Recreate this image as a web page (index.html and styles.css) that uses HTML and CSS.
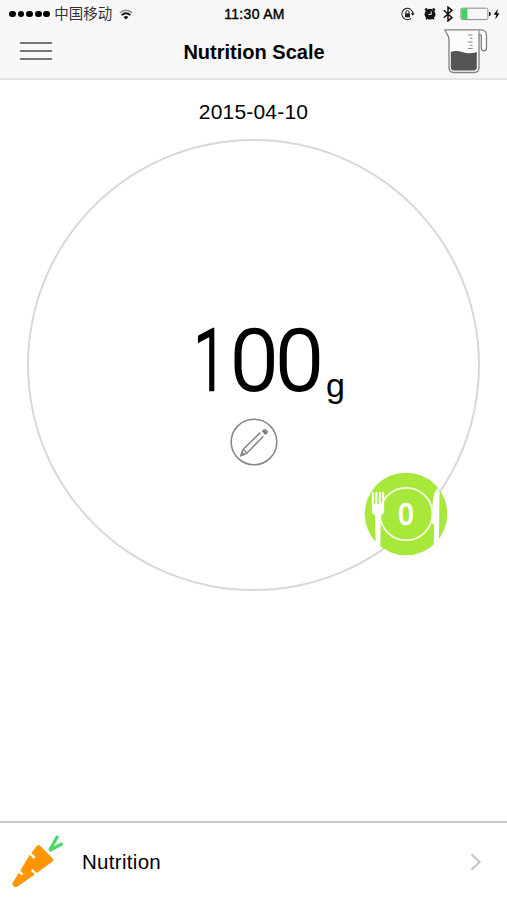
FILE: index.html
```html
<!DOCTYPE html>
<html lang="en">
<head>
<meta charset="utf-8">
<title>Nutrition Scale</title>
<link rel="stylesheet" href="styles.css">
</head>
<body>
<div class="app">
  <header class="header">
    <div class="status">
      <div class="carrier">
        <span class="dots"><i></i><i></i><i></i><i></i><i></i></span>
        <span class="operator">中国移动</span>
        <svg class="wifi" width="14" height="11" viewBox="0 0 14 11" fill="none" stroke="#111">
          <path d="M.8 4Q7-1.5 13.2 4" stroke="#888" stroke-width="1.3"/>
          <path d="M2.7 6.2Q7 2.3 11.3 6.2" stroke-width="1.8"/>
          <path d="M4.6 8Q7 6.2 9.4 8L7 10.6z" fill="#111" stroke="none"/>
        </svg>
      </div>
      <time class="clock">11:30 AM</time>
      <svg class="indicators" width="102" height="16" viewBox="0 0 102 16" fill="none" stroke="#222">
        <path d="M11 3.6A5.6 5.6 0 1 0 11 12.4M11.2 3.8A5.6 5.6 0 0 1 13 8" stroke-width="1.1"/>
        <path d="M10.9 7.2h3.8l-2 2.6z" fill="#222" stroke="none"/>
        <path d="M5 7.3h5v4H5z" fill="#222" stroke="none"/>
        <path d="M6 7.5V6a1.5 1.5 0 0 1 3 0v1.5"/>
        <circle cx="30" cy="8.2" r="5.4" fill="#111" stroke="none"/>
        <path d="M25 4.2l2.2-1.7M35 4.2l-2.2-1.7" stroke="#111" stroke-width="1.8"/>
        <path d="M27.2 11.8l-1.2 1.6M32.8 11.8l1.2 1.6" stroke="#111" stroke-width="1.4"/>
        <path d="M31.2 5.4V8.4h-2.8" stroke="#fff" stroke-width="1"/>
        <path d="M43.8 4.2l8.2 7.5-4 3.2V1.1l4 3.2-8.2 7.5" stroke="#111" stroke-width="1.5"/>
        <rect x="60.9" y="2.2" width="27" height="11.4" rx="1.4" stroke="#8b8b8b" stroke-width="1"/>
        <path d="M61.4 2.7h6v10.4h-6z" fill="#40d45d" stroke="none"/>
        <path d="M89 6h1.2q1.2 2 0 4H89z" fill="#222" stroke="none"/>
        <path d="M98 2.8l-4.5 6h2.7l-.9 4.7 4.3-6.3H97z" fill="#111" stroke="none"/>
      </svg>
    </div>
    <div class="nav">
      <div class="menu"><i></i><i></i><i></i></div>
      <h1 class="title">Nutrition Scale</h1>
      <svg class="jug" width="46" height="46" viewBox="0 0 46 46" fill="none" stroke="#808080" stroke-width="1.3" stroke-linejoin="round">
        <path d="M2.8 1.8h36q5.7 0 5.7 6v12q0 3-2.6 3t-2.6-3V8.5q0-2-2.3-2v33q0 5-5 5H12q-5 0-5-5V11.5q0-3-1.7-5L2.8 2z" fill="#fcfcfc"/>
        <path d="M37 6.5V3q0-1-1-1" stroke="#999"/>
        <path d="M8.8 24q5-2 12 .2t14-.3v15.6q0 3-3.4 3H12.2q-3.4 0-3.4-3z" fill="#555" stroke="none"/>
        <path d="M26 7h4.5M28 10.5h2.5M26 14h4.5M28 17.2h2.5M26 20.5h4.5" stroke="#888" stroke-width="1.1"/>
      </svg>
    </div>
  </header>

  <main class="main">
    <div class="date">2015-04-10</div>
    <section class="dial">
      <div class="reading"><span class="one">1</span><span class="zeros">00</span><span class="unit">g</span></div>
      <div class="edit">
        <svg width="48" height="48" viewBox="0 0 48 48" fill="none" stroke="#858585" stroke-width="1.5">
          <circle cx="24" cy="24" r="22.8"/>
          <path d="M30.3 14.6L12.9 31.6l-1.9 5.9 5.7-2.1L33.4 18.2M12.9 31.6q2.6.8 3.8 3.8"/>
          <path d="M11 37.5l.9-3 2 2.2z" fill="#777"/>
          <path d="M31.8 13.2l2-1.9 3.7 3.8-1.9 1.9zM34.1 11.1l1.2-.4 3 3-.5 1.2z" fill="#777" stroke="none"/>
        </svg>
      </div>
      <div class="plate">
        <svg width="84" height="84" viewBox="0 0 84 84">
          <defs><clipPath id="disc"><circle cx="42" cy="42" r="41.3"/></clipPath></defs>
          <circle cx="42" cy="42" r="41.3" fill="#a7e83a"/>
          <g clip-path="url(#disc)">
            <circle cx="42.2" cy="42" r="26.2" fill="none" stroke="#f7ffe9" stroke-width="1.8"/>
            <path d="M7.8 20.7q0-1 1-1t1 1V32h1.5V20.7q0-1 1-1t1 1V32h1.5V20.7q0-1 1-1t1 1V32h1.4V20.7q0-1 1-1t1 1V38q0 4-3.4 5.5L16.2 84h-4.4l-.7-40.5Q7.8 42 7.8 38z" fill="#fff"/>
            <path d="M74.8 84h-5.4l.8-31.2-2.4-1.3q.2-25 3-31 1.4-4 3.4-4 1.2.6 1.3 4z" fill="#fff"/>
          </g>
        </svg>
        <span class="count">0</span>
      </div>
    </section>
  </main>

  <footer class="footer">
    <svg class="carrot" width="52" height="54" viewBox="0 0 52 54">
      <path d="M37.5 15.5L45.8 1M37.5 15.5L50.5 8.5" fill="none" stroke="#4bd964" stroke-width="3.2"/>
      <path d="M25 10.6q1.7-1.3 3.1.2L40.8 23.6q1.3 1.5-.3 2.8L24.8 38l-4.1-4.1-1.8 1.8 3.8 3.8L6 51.2q-2.3 1.7-4.3.2-2.2-1.8-.7-4.2l5.8-9.4 2.8 2.8 1.8-1.8-3.1-3.1 9.4-15.9 4.1 4.1 1.8-1.8-4.2-4.2z" fill="#ff9500"/>
    </svg>
    <span class="label">Nutrition</span>
    <svg class="chevron" width="12" height="18" viewBox="0 0 12 18"><path d="M1.5 1.3L9.6 9l-8.1 7.7" fill="none" stroke="#c5c5c9" stroke-width="2"/></svg>
  </footer>
</div>
</body>
</html>
```

FILE: styles.css
```css
* { box-sizing: border-box; }
body {
  margin: 0;
  background: #fff;
  color: #000;
  font-family: "Liberation Sans", "Noto Sans CJK SC", sans-serif;
}
svg { display: block; flex: none; }
.app { width: 507px; height: 900px; display: flex; flex-direction: column; overflow: hidden; }

.header { height: 80px; flex: none; background: #f7f7f7; border-bottom: 2px solid #e5e5e5; }
.status {
  height: 28px;
  display: grid;
  grid-template-columns: 1fr 64px 1fr;
  align-items: center;
  padding: 0 7px 0 9px;
}
.carrier { display: flex; align-items: center; }
.dots { display: flex; gap: 1.8px; }
.dots i { width: 6.8px; height: 6.8px; border-radius: 50%; background: #000; }
.operator { margin-left: 4px; width: 58px; font: 14.5px/20px "Noto Sans CJK SC", sans-serif; color: #333; white-space: nowrap; position: relative; top: -1px; }
.wifi { margin-left: 7px; }
.clock { font-size: 14px; letter-spacing: .3px; line-height: 20px; white-space: nowrap; -webkit-text-stroke: .4px #000; text-align: center; }
.indicators { justify-self: end; margin-right: -2px; }

.nav {
  height: 48px;
  display: grid;
  grid-template-columns: 1fr 150px 1fr;
  align-items: center;
  padding: 0 19px 0 20px;
}
.menu { display: grid; gap: 5.7px; width: 32px; margin-top: -2px; }
.menu i { height: 2px; background: #777; }
.title { margin: 0; font-size: 20px; line-height: 24px; text-align: center; white-space: nowrap; }
.jug { justify-self: end; margin-top: -2px; }

.main { height: 741px; flex: none; display: flex; flex-direction: column; align-items: center; }
.date { margin-top: 20px; height: 24px; font-size: 21px; letter-spacing: .2px; line-height: 24px; }
.dial {
  position: relative;
  width: 453px;
  height: 452px;
  margin-top: 14.5px;
  border: 2px solid #d8d8d8;
  border-radius: 50%;
  display: flex;
  flex-direction: column;
  align-items: center;
}
.reading {
  margin-top: 170px;
  margin-left: 21px;
  height: 100px;
  display: flex;
  align-items: baseline;
  font: 300 85.5px/100px Roboto, sans-serif;
  -webkit-text-stroke: 2px #000;
}
.one { transform: scaleX(.68); transform-origin: 71% 50%; -webkit-text-stroke-width: 2.6px; }
.zeros { letter-spacing: -2.1px; }
.unit { font: 34px/40px "Liberation Sans", sans-serif; -webkit-text-stroke: 0; margin-left: 5px; position: relative; top: 7px; }
.edit { margin-top: 7px; }
.plate { position: absolute; left: 335px; top: 331px; width: 84px; height: 84px; }
.count {
  position: absolute;
  inset: 0;
  font: 600 30px/84px "Open Sans", sans-serif;
  color: #fff;
  -webkit-text-stroke: .5px #fff;
  transform: scaleX(.92);
  text-align: center;
}

.footer {
  height: 79px;
  flex: none;
  border-top: 2px solid #c8c8c8;
  display: flex;
  align-items: center;
  padding: 0 25px 0 12px;
}
.label { margin-left: 18px; flex: 1; font-size: 20.5px; letter-spacing: .3px; line-height: 24px; }
```
